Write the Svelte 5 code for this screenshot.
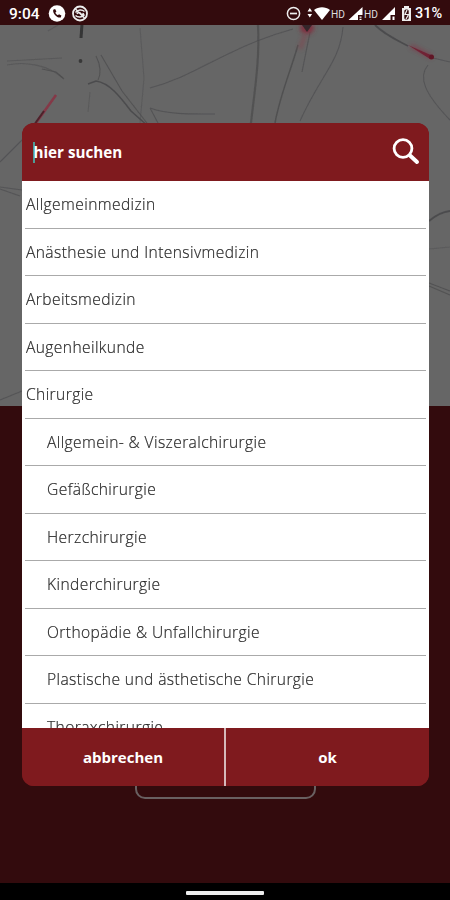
<script>
  const items = [
    { name: 'Allgemeinmedizin' },
    { name: 'Anästhesie und Intensivmedizin' },
    { name: 'Arbeitsmedizin' },
    { name: 'Augenheilkunde' },
    { name: 'Chirurgie' },
    { name: 'Allgemein- & Viszeralchirurgie', sub: true },
    { name: 'Gefäßchirurgie', sub: true },
    { name: 'Herzchirurgie', sub: true },
    { name: 'Kinderchirurgie', sub: true },
    { name: 'Orthopädie & Unfallchirurgie', sub: true },
    { name: 'Plastische und ästhetische Chirurgie', sub: true },
    { name: 'Thoraxchirurgie', sub: true }
  ];
</script>

<div class="screen">
  <header class="status">
    <span class="time">9:04</span>
    <svg class="left-icons" width="42" height="18" viewBox="0 0 42 18">
      <circle cx="9" cy="8.5" r="8.3" fill="#fff" />
      <path d="M5.2 4.700l1.900-.6 1.300 2.500-1.100 1.100c.6 1.200 1.400 2 2.600 2.600l1.100-1.100 2.400 1.300-.6 2c-3.800.7-8.300-3.900-7.600-7.800z" fill="#330b0d" />
      <circle cx="32" cy="8.5" r="7" fill="none" stroke="#eee" stroke-width="1.8" />
      <path d="M27.500 7.500c2-3 6.500-3.500 9-1M36.500 9.500c-2 3-6.500 3.500-9 1M29 9c1-2 2.500-2 3.500-.5s2.500 1.200 3-.5M27.500 4l9 9" fill="none" stroke="#eee" stroke-width="1.500" />
    </svg>
    <svg class="right-icons" width="126" height="20" viewBox="0 0 126 20">
      <circle cx="7.5" cy="9.5" r="6.1" fill="none" stroke="#eee" stroke-width="1.5" />
      <path d="M4 9.500h7" stroke="#eee" stroke-width="1.7" />
      <path d="M21.500 7.500l2.300-3.500 2.300 3.500zM21.500 10l2.300 3.500 2.300-3.500z" fill="#fff" />
      <path d="M28 6c4.500-3.700 11.500-3.700 16 0l-8 10z" fill="#fff" />
      <text x="45" y="13.500" textLength="14" lengthAdjust="spacingAndGlyphs">HD</text>
      <path d="M62.500 16L76.500 3v8h-4.500v5z" fill="#fff" />
      <path d="M74.500 12.500v1.200M74.500 14.800v1.200" stroke="#fff" stroke-width="2" />
      <text x="78" y="13.500" textLength="14" lengthAdjust="spacingAndGlyphs">HD</text>
      <path d="M96 16L109 3v8h-4.500v5z" fill="#fff" />
      <path d="M107.500 12.500v3.500" stroke="#fff" stroke-width="2" />
      <path d="M118 2h5v2h2v13h-9V4h2z" fill="#eee" />
      <path d="M118.300 7c0-2 4.400-2 4.400 0v7c0 2-4.400 2-4.400 0z" fill="#330b0d" />
      <path d="M121 6l-2 4.500h3.500L120 15" fill="none" stroke="#eee" stroke-width="1.200" />
    </svg>
    <span class="battery">31%</span>
  </header>

  <div class="backdrop">
    <svg class="neurons" width="450" height="381" viewBox="0 25 450 381" fill="none">
      <defs>
        <filter id="soft" filterUnits="userSpaceOnUse" x="0" y="20" width="450" height="390"><feGaussianBlur stdDeviation="0.55" /></filter>
        <filter id="glow" filterUnits="userSpaceOnUse" x="0" y="20" width="450" height="390"><feGaussianBlur stdDeviation="2" /></filter>
      </defs>
      <g filter="url(#soft)" stroke="#4c4c4e" stroke-width="1.1">
        <path d="M7 65C25 61 48 65 63 78M7 61l55-3" opacity=".5" />
        <path d="M42 69l14 3 8 7" opacity=".8" />
        <path d="M88 84l8-3c14 2 25 17 35 30l18 16" stroke-width="1.6" />
        <path d="M101 55l21 36 28 36M98 80c4-8 1-18-2-24" opacity=".75" />
        <path d="M140 28l4 50-4 45M88 112l2-20M58 25L48 31" opacity=".4" />
        <path d="M150 88c30-8 51-21 78-34 22-11 40-18 65-25" opacity=".65" />
        <path d="M258 25c2 35-4 70-7 98" stroke-width="2.2" opacity=".75" />
        <path d="M298 45c-7 25-18 50-23 78" stroke-width="1.5" opacity=".85" />
        <path d="M150 108c20 7 43 6 65 6M150 108l8 15" opacity=".7" />
        <path d="M343 27c-3 35-22 47-43 94M310 32l-8 40M428 65c-10 12-4 28 22 55M433 58l17 4" opacity=".65" />
        <path d="M375 25c10 10 22 15 33 21" stroke-width="1.8" />
        <path d="M0 162l22-22M0 187l22 3M0 189l20 7M0 400l22-9" opacity=".65" />
        <path d="M429 221c7-6 13-9 21-10" stroke-width="2" />
        <path d="M429 249l21-2" opacity=".4" />
        <path d="M429 283l21 8M429 286l21 9" opacity=".75" />
      </g>
      <path d="M82 24l-1 14" stroke="#343536" stroke-width="3" filter="url(#soft)" />
      <circle cx="80.5" cy="61" r="1.9" fill="#393939" filter="url(#soft)" />
      <path d="M56 95L36 123" stroke="#8a3043" stroke-width="2.6" opacity=".85" filter="url(#soft)" />
      <path d="M44 111l-10 14" stroke="#4c222a" stroke-width="2" filter="url(#soft)" />
      <ellipse cx="307" cy="28" rx="7" ry="6" fill="#803240" filter="url(#glow)" />
      <path d="M302 25h10l-5 7z" fill="#35252a" filter="url(#soft)" />
      <path d="M305 35l-5 14" stroke="#84434d" stroke-width="3" opacity=".8" filter="url(#glow)" />
      <path d="M411 46l21 11" stroke="#80394a" stroke-width="4" opacity=".75" filter="url(#glow)" />
      <path d="M408 45l25 11-3 3z" fill="#702434" filter="url(#soft)" />
      <circle cx="431.5" cy="57" r="2.5" fill="#611725" filter="url(#soft)" />
    </svg>
  </div>
  <div class="page-button"></div>

  <div class="dialog">
    <div class="search">
      <span class="caret"></span>
      <span class="placeholder">hier suchen</span>
      <svg width="28" height="28" viewBox="0 0 28 28" fill="none" stroke="#fff">
        <circle cx="11" cy="10.5" r="8.9" stroke-width="2.8" />
        <path d="M18 17.5l7 6.5" stroke-width="4" stroke-linecap="round" />
      </svg>
    </div>
    <ul>
      {#each items as item}
        <li class:sub={item.sub}>{item.name}</li>
      {/each}
    </ul>
    <div class="actions">
      <button>abbrechen</button>
      <button>ok</button>
    </div>
  </div>

  <div class="nav"><span></span></div>
</div>

<style>
  .screen {
    position: relative;
    width: 450px;
    height: 900px;
    overflow: hidden;
    display: flex;
    flex-direction: column;
    background: #330b0d;
    font-family: 'Open Sans', 'Noto Sans', sans-serif;
  }
  .status {
    height: 25px;
    display: flex;
    align-items: center;
    box-sizing: border-box;
    padding: 2px 0 0 9px;
    flex: none;
    color: #fff;
    font: 500 15.5px/20px Roboto, sans-serif;
  }
  .time { width: 39px; }
  .left-icons { flex: none; }
  .right-icons { margin-left: auto; flex: none; }
  .right-icons text { font: 400 11.5px Roboto, sans-serif; fill: #ddd; }
  .battery {
    width: 38px;
    padding: 1px 0 0 3px;
    box-sizing: border-box;
    font-size: 14.5px;
  }
  .backdrop { height: 381px; background: #666; flex: none; }
  .neurons { display: block; }
  .page-button {
    position: absolute;
    left: 135px;
    top: 749px;
    width: 181px;
    height: 50px;
    box-sizing: border-box;
    border: 2px solid #696061;
    border-radius: 10px;
  }
  .dialog {
    position: absolute;
    left: 22px;
    top: 123px;
    width: 407px;
    height: 663px;
    display: flex;
    flex-direction: column;
    border-radius: 12px;
    overflow: hidden;
    background: linear-gradient(#7f1a1e 50px, #fff 50px, #fff 610px, #7f1a1e 610px);
  }
  .search {
    height: 58px;
    flex: none;
    display: flex;
    align-items: center;
    box-sizing: border-box;
    padding: 0 9px 0 11px;
    background: #7f1a1e;
    color: #fff;
  }
  .caret { width: 1.5px; height: 21px; background: #4f9c96; }
  .placeholder { margin-left: -1px; flex: 1; font-size: 15.2px; font-weight: 700; }
  ul {
    flex: 1;
    min-height: 0;
    overflow: hidden;
    margin: 0;
    padding: 0 3px;
    list-style: none;
  }
  li {
    height: 47.5px;
    box-sizing: border-box;
    padding-left: 1px;
    border-bottom: 1px solid #aaa;
    font-size: 15.6px;
    font-weight: 300;
    letter-spacing: 0.4px;
    line-height: 46.4px;
    color: #2a2a2a;
    -webkit-text-stroke: 0.2px #2a2a2a;
    white-space: nowrap;
  }
  li.sub { padding-left: 22px; }
  .actions { height: 58px; flex: none; display: flex; background: #7f1a1e; }
  button {
    flex: 1;
    border: 0;
    padding: 0;
    background: none;
    color: #fff;
    font: 700 15px 'Open Sans', sans-serif;
  }
  button:first-child { flex: none; width: 202px; }
  button + button { border-left: 2px solid #d5b9ba; }
  .nav {
    height: 17px;
    margin-top: auto;
    display: flex;
    justify-content: center;
    background: #000;
  }
  .nav span { width: 78px; height: 4px; margin-top: 8px; border-radius: 1px; background: #eee; }
</style>
